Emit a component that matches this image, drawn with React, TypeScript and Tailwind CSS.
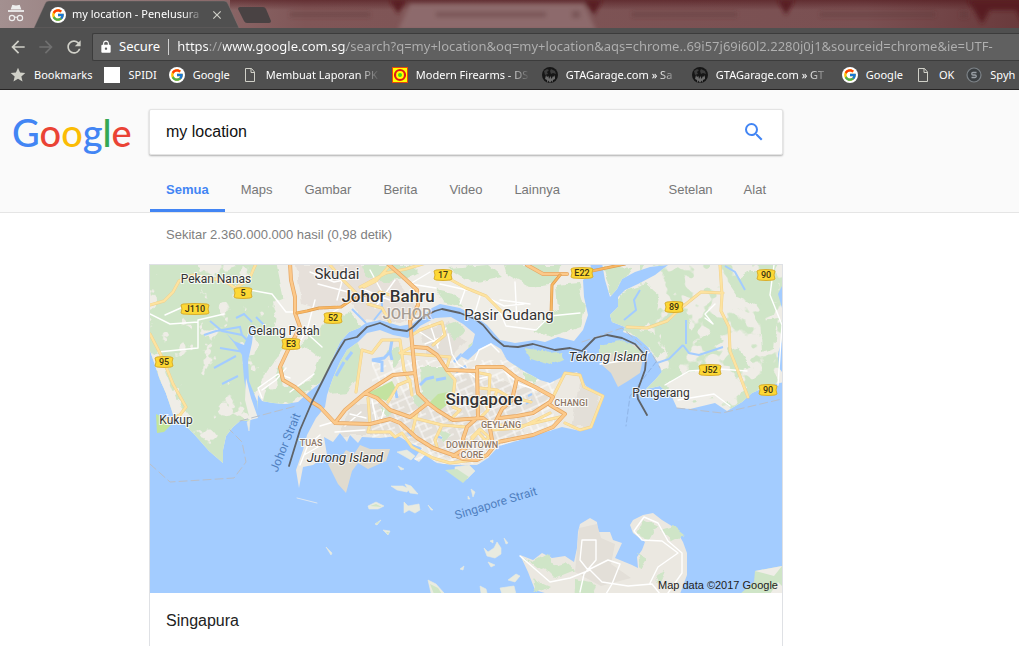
import React from 'react';
import { FcGoogle } from 'react-icons/fc';
import { MdArrowBack, MdArrowForward, MdRefresh, MdLock, MdStar, MdSearch, MdClose } from 'react-icons/md';

type BookmarkIcon = 'star' | 'blank' | 'google' | 'file' | 'target' | 'globe' | 'spy';

interface Bookmark {
  icon: BookmarkIcon;
  label: string;
  long?: boolean;
}

const bookmarks: Bookmark[] = [
  { icon: 'star', label: 'Bookmarks' },
  { icon: 'blank', label: 'SPIDI' },
  { icon: 'google', label: 'Google' },
  { icon: 'file', label: 'Membuat Laporan PK', long: true },
  { icon: 'target', label: 'Modern Firearms - DS', long: true },
  { icon: 'globe', label: 'GTAGarage.com » Sa', long: true },
  { icon: 'globe', label: 'GTAGarage.com » GT', long: true },
  { icon: 'google', label: 'Google' },
  { icon: 'file', label: 'OK' },
  { icon: 'spy', label: 'Spyh' },
];

const pageTabs = ['Semua', 'Maps', 'Gambar', 'Berita', 'Video', 'Lainnya'];

const GoogleBadge: React.FC = () => (
  <span className="flex h-4 w-4 shrink-0 items-center justify-center rounded-full bg-white">
    <FcGoogle className="h-3.5 w-3.5" />
  </span>
);

const BookmarkGlyph: React.FC<{ icon: BookmarkIcon }> = ({ icon }) => {
  switch (icon) {
    case 'star':
      return <MdStar className="h-4 w-4 shrink-0 scale-110 text-[#d0d0c8]" />;
    case 'blank':
      return <span className="h-4 w-4 shrink-0 bg-white" />;
    case 'google':
      return <GoogleBadge />;
    case 'file':
      return (
        <svg viewBox="0 0 16 16" className="h-4 w-4 shrink-0" fill="none" stroke="#d0d0c8">
          <path d="M3.500 1.500h6l3 3.500v9.500h-9zM9 1.500v4h3.500" />
        </svg>
      );
    case 'target':
      return (
        <svg viewBox="0 0 16 16" className="h-4 w-4 shrink-0">
          <rect width="16" height="16" fill="#ff0" />
          <rect x=".5" y=".5" width="15" height="15" fill="none" stroke="#e8480c" />
          <circle cx="8" cy="8" r="5" fill="none" stroke="#e01818" strokeWidth="2.200" />
          <circle cx="8" cy="8" r="2" fill="#3fd51c" />
        </svg>
      );
    case 'globe':
      return (
        <svg viewBox="0 0 16 16" className="h-4 w-4 shrink-0">
          <circle cx="8" cy="8" r="8" fill="#161616" />
          <path d="M2 4l3-2 2 1-2 2 1 2-3 1zM9 2l4 2 1 3-3-1-2 1-1-3z" fill="#3d3d3d" />
          <path d="M3 12l1-4 1 2 1.500-1L7 12l1.500-3 1 3 1.500-3 1 1 1-2v4l-2 1-.5 2.500-1-2-1.500 2.500-1.500-2.500-1 2.500L5 13z" fill="#6c6c6c" />
        </svg>
      );
    default:
      return (
        <svg viewBox="0 0 16 16" className="h-4 w-4 shrink-0" fill="none">
          <circle cx="8" cy="8" r="7" fill="#3c4043" stroke="#7d8388" strokeWidth="1.200" />
          <path d="M10.500 5.500H7a1.250 1.250 0 0 0 0 2.500h2a1.250 1.250 0 0 1 0 2.500H5.500" stroke="#9aa0a6" strokeWidth="1.300" />
        </svg>
      );
  }
};

const TabStrip: React.FC = () => (
  <div className="relative h-7 overflow-hidden bg-[#6b3a3c]">
    {/* Frosted window frame with the tabs of the window behind it */}
    <svg className="absolute left-0 top-0 h-7 w-[1019px]" viewBox="0 0 1019 28" aria-hidden="true">
      <defs>
        <linearGradient id="frame">
          <stop offset="0" stopColor="#a39090" />
          <stop offset=".3" stopColor="#805657" />
          <stop offset=".85" stopColor="#7a5052" />
          <stop offset="1" stopColor="#6a3a3c" />
        </linearGradient>
        <linearGradient id="frameShade" gradientUnits="userSpaceOnUse" x1="0" y1="0" x2="0" y2="10">
          <stop offset="0" stopColor="#4c1116" stopOpacity=".55" />
          <stop offset="1" stopColor="#4c1116" stopOpacity="0" />
        </linearGradient>
        <filter id="soft"><feGaussianBlur stdDeviation="2" /></filter>
      </defs>
      <rect width="1019" height="28" fill="url(#frame)" />
      <rect x="230" width="789" height="28" fill="url(#frameShade)" />
      <g filter="url(#soft)">
        <path d="M398 30l12-26h174l12 26z" fill="#8d6b6c" />
        <path d="M390 0h16l-8 14zM584 0h18l-8 15zM778 0h16l-8 15zM968 0h60v34l-12-24h-26l-8 14z" fill="#581c20" />
        {/* rects rather than strokes, so that the blur has a box to work in */}
        <g fill="#5d3639" opacity=".4">
          <rect x="290" y="12" width="80" height="5" />
          <rect x="436" y="12" width="110" height="5" />
          <rect x="572" y="11" width="8" height="7" />
          <rect x="632" y="12" width="105" height="5" />
          <rect x="820" y="12" width="115" height="5" />
          <rect x="960" y="11" width="8" height="7" />
        </g>
      </g>
      <path d="M34 28L45 4q1-3 4-3h175q3 0 4 3l11 24z" fill="#505050" stroke="#8a7a7a" strokeOpacity=".4" />
      <path d="M238 9q0-2 2-2h23q2 0 3 2l5 12q0 2-2 2h-22q-2 0-3-2z" fill="#494243" />
      <g fill="none" stroke="#eee" strokeWidth="1.200">
        <path d="M11.500 9l1.200-3.500q3.300 1 6.600 0L20.500 9z" fill="#eee" />
        <path d="M8 11h16" strokeWidth="1.800" />
        <circle cx="12" cy="18" r="2.600" />
        <circle cx="20" cy="18" r="2.600" />
        <path d="M14.600 17.500q1.400-1 2.800 0" />
      </g>
    </svg>
    <div className="relative flex h-7 items-center pt-px pl-[50px]">
      <GoogleBadge />
      <span className="ml-1.5 w-33 whitespace-nowrap text-[11px] text-white [mask-image:linear-gradient(90deg,#000_84%,transparent)]">
        my location - Penelusura
      </span>
      <button type="button" aria-label="Close tab" className="ml-1.5 text-[#d0d0c8]">
        <MdClose className="h-3.5 w-3.5" />
      </button>
    </div>
  </div>
);

const BrowserChrome: React.FC = () => (
  <div className="overflow-hidden border-b border-[#262424] bg-[#505050] font-['Noto_Sans',sans-serif]">
    <TabStrip />
    <div className="flex h-[33px] items-end pl-2">
      <div className="flex h-7 items-center gap-2 text-[#d0d0c8]">
        <button type="button" aria-label="Back"><MdArrowBack className="h-5 w-5" /></button>
        <button type="button" aria-label="Forward" className="text-[#707070]"><MdArrowForward className="h-5 w-5" /></button>
        <button type="button" aria-label="Reload"><MdRefresh className="h-5 w-5" /></button>
      </div>
      <div className="ml-2 flex h-7 min-w-0 flex-1 items-center rounded-l-xs border border-r-0 border-[#3c3c3c] bg-[#606060] pl-1.5 text-[13px] text-white">
        <MdLock className="h-3.5 w-3.5 shrink-0" />
        <span className="ml-1.5">Secure</span>
        <span className="mx-2 h-4 w-px shrink-0 bg-[#d0d0d0]" />
        <input
          aria-label="Address"
          readOnly
          value="https://www.google.com.sg/search?q=my+location&oq=my+location&aqs=chrome..69i57j69i60l2.2280j0j1&sourceid=chrome&ie=UTF-"
          className="min-w-0 flex-1 bg-[linear-gradient(90deg,#fff_31px,#a8a8a8_31px,#a8a8a8_46px,#fff_46px,#fff_169px,#b0b0b0_169px)] bg-clip-text text-transparent outline-none"
        />
      </div>
    </div>
    <nav aria-label="Bookmarks" className="flex h-7 items-center gap-3 whitespace-nowrap pl-2.5 text-[11px] text-white">
      {bookmarks.map((b, i) => (
        <a key={i} href="#" className="flex shrink-0 items-center gap-2">
          <BookmarkGlyph icon={b.icon} />
          <span className={b.long ? 'w-[114px] [mask-image:linear-gradient(90deg,#000_80%,transparent)]' : ''}>
            {b.label}
          </span>
        </a>
      ))}
    </nav>
  </div>
);

const SearchHeader: React.FC = () => (
  <header className="border-b border-[#e5e5e5] bg-[#fafafa] pt-[19px]">
    <div className="flex items-center">
      <a
        href="#"
        aria-label="Google"
        className="w-[149px] shrink-0 pl-3 font-['Lato',sans-serif] text-[38px] leading-[44px] font-medium text-[#4285f4]"
      >
        G<span className="text-[#ea4335]">o</span><span className="text-[#fbbc05]">o</span>g<span className="text-[#34a853]">l</span><span className="text-[#ea4335]">e</span>
      </a>
      <form className="flex h-[46px] w-full max-w-[634px] items-center rounded-xs border border-[#e4e4e4] bg-white px-4 shadow-[0_1px_2px_rgba(0,0,0,0.3)]">
        <input aria-label="Telusuri" defaultValue="my location" className="min-w-0 flex-1 text-base text-[#111] outline-none" />
        <button type="button" aria-label="Cari" className="text-[#4285f4]">
          <MdSearch className="h-6 w-6" />
        </button>
      </form>
    </div>
    <nav className="ml-[150px] flex max-w-[632px] items-end pt-3 text-[13px] leading-5 text-[#777]">
      {pageTabs.map((tab, i) => (
        <a
          key={tab}
          href="#"
          className={i === 0 ? 'border-b-3 border-[#4285f4] px-4 pt-[13px] pb-[9px] font-bold text-[#4285f4]' : 'border-b-3 border-transparent px-4 pt-[13px] pb-[9px]'}
        >
          {tab}
        </a>
      ))}
      <a href="#" className="ml-auto border-b-3 border-transparent px-[15px] pt-[13px] pb-[9px]">Setelan</a>
      <a href="#" className="border-b-3 border-transparent px-4 pt-[13px] pb-[9px]">Alat</a>
    </nav>
  </header>
);

// ---- Map data. Every path is in the coordinates of the map's view box. ----

const WEST_LAND =
  'M148 263H590L592 272 583 280 584 297 588 315 583 330 574 341 558 337 545 342 535 340 515 343 500 340 487 325 473 315 460 308 440 304 432 308 420 318 412 324 400 326 380 320 366 323 359 328 349 332 340 342 334 355 328 370 320 383 310 391 298 402 285 404 273 403 262 401 258 395 257 415 249 421 240 421 233 427 226 436 223 450 223 463 209 451 194 434 184 424 174 417 166 393 160 380 155 365 149 348z';
const EAST_LAND =
  'M602 263L605 280 610 297 617 289 622 279 635 272 650 267 668 265 655 275 638 284 625 290 618 297 618 307 610 315 612 322 625 327 623 332 637 337 648 347 658 363 662 372 655 380 646 389 660 386 672 397 677 408 690 409 715 403 727 411 742 402 752 393 768 386 784 382V263z';
const SINGAPORE =
  'M299 488L296 470 303 450 307 435 316 418 325 407 327 395 333 378 340 362 347 350 358 342 367 333 380 330 393 335 408 338 420 326 435 318 451 317 463 324 475 334 472 345 460 356 468 360 480 349 491 343 501 349 507 360 522 370 540 380 550 383 566 375 577 372 586 386 602 395 596 413 592 425 580 431 562 427 520 440 499 446 488 458 477 465 453 465 437 463 425 455 419 462 414 459 422 448 410 443 398 436 380 438 362 437 358 443 350 435 347 442 340 433 333 442 324 437 327 455 313 465 303 467z';

const johorGreens = [
  'M360 265h50l8 8-30 10-22-6zM505 265h55l-6 18-24 4-22-12zM448 268l40-3 14 12-30 6z',
  'M556 285l22-2 6 22-4 22-30 10-16-6 10-14 14-8z',
  'M436 290l18 4 10 14-20-6z',
];

const islandGreens = [
  'M420 367l24 0 8 8 0 16-20 9-10-6z',
  'M325 365l12-18 18-10 8 14-6 30-10 12-18 2-6-12z',
  'M388 352l10-6 4 10-8 12zM446 325l12-4 6 12-10 8zM412 395l8-2 6 8-8 8z',
  'M505 352l14 8 10 10-10 0zM524 372l16 6-4 6-12-4zM438 430l14 4-8 10zM468 345l10-8 6 4-10 10zM380 408l14 2-6 8z',
];

const eastGreens = [
  'M603 266l28 2-12 18-8 10zM622 292l24-8 14 12-4 20-18 16-22-2-8-12zM625 328l28 4 12 20-8 6-16-16z',
  'M660 320l26-6 8 20-6 18-18 8-10-22zM730 285l20-14 26 0 6 30-24 4-20-8zM695 340l20-10 10 10-14 8z',
  'M656 372l22-6 6 10-16 8zM728 350l10-4 12 20-12 6zM760 320l18-2-4 30-12 4z',
];

const batamGreens = 'M522 556l12 6 14-8 6 12-14 4zM545 568l20-6 10 8-20 8zM532 578l18 8-14 8zM643 520l14 6-8 14-12-6zM660 530l14-4 10 8-12 6zM637 553l10 6-6 10zM655 575l10-4-6 14zM575 580l22 4-4 12h-20z';

const ISLETS = [
  'M397 452l10-2 8 6-4 4zM398 466l6 3-3 1zM391 486l12 0 6 3-2 3-10-2zM405 484l6 2 7 8-8-1zM404 502l4 4 11-2 1 6-5 3-6-3-5 3zM368 506l8-4 8 4-6 3-9 0zM375 524l6-4-4 5zM383 530l7 1-2 4zM428 505l5 5-2 0z',
  'M471 489l4 3-2 5zM468 496l2 3-2 0zM484 548l4 4 6-4 3-6 4 6 0 6-6 4-8-2zM490 541l3-1 0 3zM504 538l4 5-2 1zM488 562l7 3-4 2zM460 569l4-3-1 4zM428 580l8 4 8 9h-13zM480 586l6 3 1 4h-6z',
  'M508 580l8-6 4 2-5 6zM500 588l14-2 2 8h-14zM326 547l6 6-1 2zM247 422l3-2-1 11zM455 467l14-2 6 6-8 8-12-8z',
];

const majorRoads = [
  'M290 263L291 280 295 297 295 313 300 327 288 350 280 367 283 380 295 387 312 402 320 407 335 423 370 424 390 419 400 423 417 438 433 448 453 455 463 459 477 460 487 455 495 445 498 442 533 435 553 427 565 414 550 405',
  'M387 263L403 277 417 290 418 305 410 321 412 343 415 373 418 393 428 403 437 410 453 420 483 418 489 423 492 440',
  'M335 423L345 410 365 393 377 398 390 410 410 417 428 403',
  'M365 393L393 375 415 373',
  'M415 347L427 348 437 355 447 370 477 371',
  'M477 367L503 367 517 378 535 387 553 397 550 402 533 413 517 416 500 418',
  'M477 367l1 50-11 10-4 12 3 9-13 8M517 378l-5 22-10 9-6 12',
  'M527 265l16 9 24 0',
];

const trunkRoads = 'M297 313l10-2 12-3 22-1 12-8 12-4M560 275l-8 10-1 30M582 273l43-9';

const minorRoads = [
  'M150 305l14-4 9-9 6-11 14-6 32 6 10 7 14-8 5-12 3-6M150 334l13 25 10 25 13 23-6 8-15 6M330 265l14 16 12 12',
  'M360 287l26-14 20-4 20-6M390 265l-14 16-12 6M370 300l10-8 20 6 18 0M390 322l-8-14-14-4M444 276l22 12 20 8 16 16M627 327l20 1 20-7 14-13 20-16 22 1M720 265l2 30-1 16 8 16 1 24 8 20 10 26',
  'M356 392l6-42 10 3 10-13 18 0 4 30 6 12 2 13M400 353l50 4-4 13 9 10-2 17M412 335l8-5 22-8 3 13-12 10M388 402l10-17 12-5M400 353l12-6',
  'M368 398l2 26-2 8 22 0 5 5 7-4 10 14 21 11 17 5 24-3M410 417l32 8-7 15 2 7M417 413l-5 20M442 425l24 2M480 373l10 2-2 35-8 8M480 388l17 2-4 14-6 3M453 407l7 3-10 10',
  'M553 397l12-24 15 2 4 12 19 9-12 31-11 3-15-7M500 425l17 2 43-10M492 430l28-2 30-15M472 437l8-8 9 8-8 10M478 432l14 16M468 444l12-14M515 398l16 4M497 390l14 8',
];

const whiteRoads = [
  'M150 314l20 10 28-2M158 352l40-4 0-28 26-6M165 315l18-8M250 290l22 4 14 18 20 0M236 286l14 10M262 390l14-10 10-12M262 398l-4-10 20-14 12 4M290 392l24-18M300 327l22 20M315 300l-8 30-12 20',
  'M310 272l24 10 20-4M318 284l30 8M345 270l-8 30M355 300l-22 12M370 270l12 22 20 4M365 290l30 12M395 280l-20 28M430 272l-20 12 26 4M440 284l36 8 28 14 20-2M465 290l-5 14M480 296l-6 20M500 312l6 14 30 4 14-14 30-3M515 282l2 40M500 300l30 4',
  'M600 364l30-4 20-8M665 385l24-14 30-2 28 2M715 304l-10 10 8 10-8-6M774 265l-4 30 12 30-4 60M678 400l36-6 16 12',
  'M420 332l18 12 8-16M430 324l8 24M425 344l20-8M448 334l4 20 6 10 10 6M475 360l4-10 12-6 8 8M455 375l12-4 10 8 10-2M505 372l14 12 18 6',
  'M300 465l8-20 12-10M304 455l14-8M320 426l20-6M335 432l30-2M345 426l16-14M372 400l4 20M384 410l-4 14M350 414l16 4',
  'M520 556l30 26 20-4 20-8 12 12 26 4 24-2 8 10M582 540l14 0 0 20-12 14-4 18M582 540l-2 20 8 10 20-10 12 4-8 20-6 10M644 517l-10 14 8 9 20 1 16 12-20 14-8 16M644 517l14 6 10 18 14 12 0 20-14 20',
];

const rivers =
  'M250 343l-8-8-20-4-12-10M242 335l-2-8-24 4M216 331l-12 4M244 352l-24-4M236 356l-22 12M238 376l-16 8M252 322l-8 -8-8 4M264 325l-8-8M683 345l-14 14-12 4M683 345l6 8 10 2 12-4 12-4M686 344l0-24M745 290l-10-18-10-6M640 290l-6 10 2 10-12 10M374 320l8-10 0-16M366 323l-14-14';

const Shield: React.FC<{ x: number; y: number; label: string }> = ({ x, y, label }) => {
  const w = label.length > 3 ? 14 : label.length > 2 ? 11 : 9;
  return (
    <g transform={`translate(${x} ${y})`}>
      <path
        d={`M${-w + 2} -5Q0 -6 ${w - 2} -5L${w} -4L${w - 1} 0L${w} 4L${w - 2} 5Q0 6 ${-w + 2} 5L${-w} 4L${-w + 1} 0L${-w} -4z`}
        fill="#fdd835"
        stroke="#d9ae2c"
      />
      <text y="3" textAnchor="middle" className="fill-[#3c3413] text-[9px] font-medium">{label}</text>
    </g>
  );
};

const shields = [
  { x: 243, y: 293, label: '5' },
  { x: 195, y: 309, label: 'J110' },
  { x: 333, y: 318, label: '52' },
  { x: 291, y: 344, label: 'E3' },
  { x: 164, y: 362, label: '95' },
  { x: 443, y: 275, label: '17' },
  { x: 582, y: 273, label: 'E22' },
  { x: 766, y: 275, label: '90' },
  { x: 674, y: 307, label: '89' },
  { x: 710, y: 370, label: 'J52' },
  { x: 768, y: 390, label: '90' },
];

const places = [
  { x: 216, y: 283, name: 'Pekan Nanas', style: 'text-xs' },
  { x: 284, y: 335, name: 'Gelang Patah', style: 'text-xs' },
  { x: 176, y: 424, name: 'Kukup', style: 'text-xs' },
  { x: 661, y: 397, name: 'Pengerang', style: 'text-xs' },
  { x: 337, y: 279, name: 'Skudai', style: 'text-[15px]' },
  { x: 509, y: 320, name: 'Pasir Gudang', style: 'text-[15px]' },
  { x: 388, y: 302, name: 'Johor Bahru', style: 'text-[17px] font-medium' },
  { x: 484, y: 405, name: 'Singapore', style: 'text-[17px] font-medium' },
  { x: 608, y: 361, name: 'Tekong Island', style: 'text-[13px] italic' },
  { x: 345, y: 462, name: 'Jurong Island', style: 'text-[13px] italic' },
];

const districts = [
  { x: 571, y: 406, name: 'CHANGI' },
  { x: 501, y: 428, name: 'GEYLANG' },
  { x: 472, y: 448, name: 'DOWNTOWN' },
  { x: 472, y: 458, name: 'CORE' },
  { x: 311, y: 446, name: 'TUAS' },
];

const LocationMap: React.FC = () => (
  <svg viewBox="150 265 632 328" className="block w-full font-['Roboto',sans-serif]" role="img" aria-label="Singapore">
    <defs>
      <clipPath id="west"><path d={WEST_LAND} /></clipPath>
      <clipPath id="east"><path d={EAST_LAND} /></clipPath>
      <clipPath id="island"><path d={SINGAPORE} /></clipPath>
      <filter id="rough" x="-5%" y="-5%" width="110%" height="110%">
        <feTurbulence type="fractalNoise" baseFrequency=".09" numOctaves="3" seed="4" result="n" />
        <feDisplacementMap in="SourceGraphic" in2="n" scale="7" xChannelSelector="R" yChannelSelector="G" />
      </filter>
      <filter id="clearings" x="0" y="0" width="100%" height="100%" colorInterpolationFilters="sRGB">
        <feTurbulence type="fractalNoise" baseFrequency=".05" numOctaves="4" seed="9" />
        <feColorMatrix values="0 0 0 0 .937  0 0 0 0 .929  0 0 0 0 .906  22 0 0 0 -14" />
      </filter>
      <filter id="woods" x="0" y="0" width="100%" height="100%" colorInterpolationFilters="sRGB">
        <feTurbulence type="fractalNoise" baseFrequency=".045" numOctaves="3" seed="21" />
        <feColorMatrix values="0 0 0 0 .812  0 0 0 0 .898  0 0 0 0 .780  22 0 0 0 -11.200" />
      </filter>
      <pattern id="streets" width="17" height="15" patternUnits="userSpaceOnUse" patternTransform="rotate(-24)">
        <path d="M0 4h17M5 0v15M5 11h12M12 4v7" fill="none" stroke="#fff" strokeWidth=".9" />
      </pattern>
    </defs>

    <rect x="150" y="265" width="632" height="328" fill="#a3ccff" />

    {/* Johor */}
    <path d={WEST_LAND} fill="#efede7" />
    <g clipPath="url(#west)">
      <path d="M146 261H276L284 300 272 330 290 340 262 380 252 400 262 406 286 408 322 380 346 338 362 326 350 312 330 318 318 330 300 345 316 360 290 360 270 372 258 424 223 470 172 422 158 384 146 344z" fill="#cfe5c7" filter="url(#rough)" />
      <rect x="150" y="265" width="140" height="200" filter="url(#clearings)" />
      <path d="M150 352l20 64 12 6 8-6-14-18-16-42zM272 302l24-10 10 26-12 20-16-14zM280 356l24-10 16 12-10 24-26 4z" fill="#efede7" filter="url(#rough)" />
      <path d="M296 265h68l36 18 24 30-24 10-36-4-14-16-24 8-24-8z" fill="#e6e0da" filter="url(#rough)" />
      <g fill="#cfe5c7" filter="url(#rough)">
        {johorGreens.map((d) => <path key={d} d={d} />)}
      </g>
    </g>
    <path d="M252 325l-8 20-10-4-8-8 8 10 8 12 2 24 4 22 6 20h5l-2-20-8-20-1-20 4-18 2-18z" fill="#a3ccff" />
    <path d="M246 378l5 20 7 20-8 2-5-20z" fill="#efede7" />
    <path d="M156 414l8 4 8 6-8 8-7 1z" fill="#c3e59a" />

    {/* Eastern shore */}
    <path d={EAST_LAND} fill="#efede7" />
    <g clipPath="url(#east)">
      <rect x="640" y="265" width="142" height="145" filter="url(#woods)" />
      <g fill="#cfe5c7" filter="url(#rough)">
        {eastGreens.map((d) => <path key={d} d={d} />)}
      </g>
      <path d="M666 384l24-12 34-2 14 10 10 8-20 16-14-6-36 6z" fill="#efede7" filter="url(#rough)" />
    </g>
    <path d="M782 286l-4 8 4 14zM782 340l-4 14 1 14 3 4z" fill="#a3ccff" />
    <path d={rivers} fill="none" stroke="#a3ccff" strokeWidth="2" />
    <path d="M524 347l14 2 12 4 12-2 2 8-14 6-18-6z" fill="#cfe5c7" filter="url(#rough)" />

    {/* Singapore and its islands */}
    <path d={SINGAPORE} fill="#ece9e2" />
    <g clipPath="url(#island)">
      <path d="M430 375h50l70 20-30 40-60 30-60-30-30-20zM350 405h50l-10 30h-50zM420 330l30-8 16 20-20 20-20-8zM580 385l20 8-8 34-20 0z" fill="#e3dfd8" filter="url(#rough)" />
      <rect x="372" y="360" width="182" height="104" fill="url(#streets)" />
      <g fill="#cfe5c7" filter="url(#rough)">
        {islandGreens.map((d) => <path key={d} d={d} />)}
      </g>
      <path d="M368 393l24-12 4 8-10 12zM430 402l8-8 10-2 0 12-10 8z" fill="#c3e3a0" />
      <path d="M392 340l-2 12-6 6-12 2 10 2 0 10M390 352l2 8M420 385l6-6 8-2M436 380l10-2M340 350l-4 14M344 362l-8 14M352 352l-6 8M454 362l8-8M456 372l10-6M395 388l2 10M408 432l4 4" fill="none" stroke="#a3ccff" strokeWidth="3" />
      <path d="M436 436l6 2M526 404l6-4M528 396l4-2M505 356l6 2" stroke="#a3ccff" strokeWidth="2" />
    </g>
    <g fill="#e0dbcf">
      <path d="M328 464l14-8 4-6 8 4 6-9 10 4 20 0-4 12-18 8-10-6-6 8-6 22-8-9z" />
      <path d="M602 348l14-5 22 2 6 8-4 20-12 8-10 6-7-14-9-8z" />
    </g>
    <path d="M600 345l24-5 18 12-8 6-16-6-18 4z" fill="#cfe5c7" filter="url(#rough)" />
    <path d={ISLETS.join('')} fill="#e9ebe0" stroke="#e9ebe0" strokeWidth=".6" />
    <path d="M445 470l12-1 12 8-6 6z" fill="#cfe5c7" />
    <path d="M370 506l6-2 6 3zM376 523l4-2-3 3zM386 532l3 0-1 2zM430 584l8 4 4 6h-8z" fill="#cfe5c7" />

    {/* Batam */}
    <path
      d="M520 555L533 560 542 553 552 558 565 556 574 562 577 548 578 532 580 524 590 518 597 522 598 532 610 532 613 540 622 543 615 558 632 565 638 568 637 557 642 550 645 542 633 533 630 525 633 520 643 515 653 513 662 520 675 528 683 542 687 553 687 575 680 594H548L535 590 528 572z"
      fill="#ebe8e1"
    />
    <path d="M579 528l18-4 4 14 14 6-4 20 20 14-30 8-26-14z" fill="#e3dfd8" />
    <path d={batamGreens} fill="#cfe5c7" filter="url(#rough)" />
    <path d="M740 594l14-12 1-11 27-5v28z" fill="#cfe5c7" />
    <path d="M755 571l27-5-8 10zM770 594l8-12 4 4v8z" fill="#efede7" />

    {/* Roads */}
    <g fill="none" strokeLinejoin="round" strokeLinecap="round">
      <path d={whiteRoads.join('')} stroke="#fff" strokeWidth="1.400" />
      <path d={minorRoads.join('')} stroke="#efcf8c" strokeWidth="3" />
      <path d={minorRoads.join('')} stroke="#fde3a0" strokeWidth="2.200" />
      <path d={majorRoads.join('')} stroke="#e5a765" strokeWidth="4" />
      <path d={majorRoads.join('')} stroke="#fcc98a" strokeWidth="2.600" />
      <path d={trunkRoads} stroke="#dd9c4e" strokeWidth="3" />
      <path d={trunkRoads} stroke="#f9b763" strokeWidth="1.800" />
      <path
        d="M150 464l20 18 64-4 12-16-4-20-12-12M240 421l26-7 30-8M582 342l40-14 30 26 8 14M677 408l45 5 60-14"
        stroke="#b9bfc9" strokeDasharray="8 4"
      />
      <path d="M656 362l-26 34-4 30" stroke="#8fb4e6" strokeDasharray="5 3" />
      <path d="M297 498l20 5" stroke="#dfe7ef" />
      <path
        d="M289 466L300 430 312 402 332 362 340 348 345 340 357 337 367 327 380 323 393 329 407 331 413 327 423 317 435 311 442 309 460 313 475 319 483 325 493 337 504 346 518 347 533 344 555 350 570 348 582 351 595 338 607 335 622 338 635 344 643 353 646 360 645 370 637 392 638 399 647 415"
        stroke="#5f6368" strokeWidth="1.800"
      />
    </g>

    {/* Labels */}
    <text x="407" y="319" textAnchor="middle" className="fill-[#a79e95] stroke-white/60 stroke-2 text-[15px] font-medium [paint-order:stroke]">JOHOR</text>
    {districts.map((d) => (
      <text key={d.name} x={d.x} y={d.y} textAnchor="middle" className="fill-[#8d7765] stroke-white/80 stroke-2 text-[9px] font-medium [paint-order:stroke]">{d.name}</text>
    ))}
    {shields.map((s, i) => <Shield key={i} {...s} />)}
    {places.map((p) => (
      <text key={p.name} x={p.x} y={p.y} textAnchor="middle" className={`fill-[#333] stroke-white/80 stroke-2 [paint-order:stroke] ${p.style}`}>{p.name}</text>
    ))}
    <g className="fill-[#5080c0] text-xs" textAnchor="middle">
      <text transform="translate(497 507) rotate(-17)">Singapore Strait</text>
      <text transform="translate(289 444) rotate(-68)">Johor Strait</text>
    </g>
    <text x="778" y="589" textAnchor="end" className="fill-[#222] font-['Liberation_Sans',Arial,sans-serif] text-[11px]">Map data ©2017 Google</text>
  </svg>
);

const App: React.FC = () => (
  <div className="h-screen overflow-hidden bg-white font-['Liberation_Sans',Arial,sans-serif]">
    <BrowserChrome />
    <SearchHeader />
    <main className="ml-[149px] max-w-[634px]">
      <p className="px-[17px] pt-3 text-[13px] leading-5 text-[#808080]">Sekitar 2.360.000.000 hasil (0,98 detik)</p>
      <section className="mt-[19px] border border-[#dfe1e5]">
        <LocationMap />
        <h2 className="px-4 pt-4 pb-12 text-base leading-6 text-[#222]">Singapura</h2>
      </section>
    </main>
  </div>
);

export default App;
